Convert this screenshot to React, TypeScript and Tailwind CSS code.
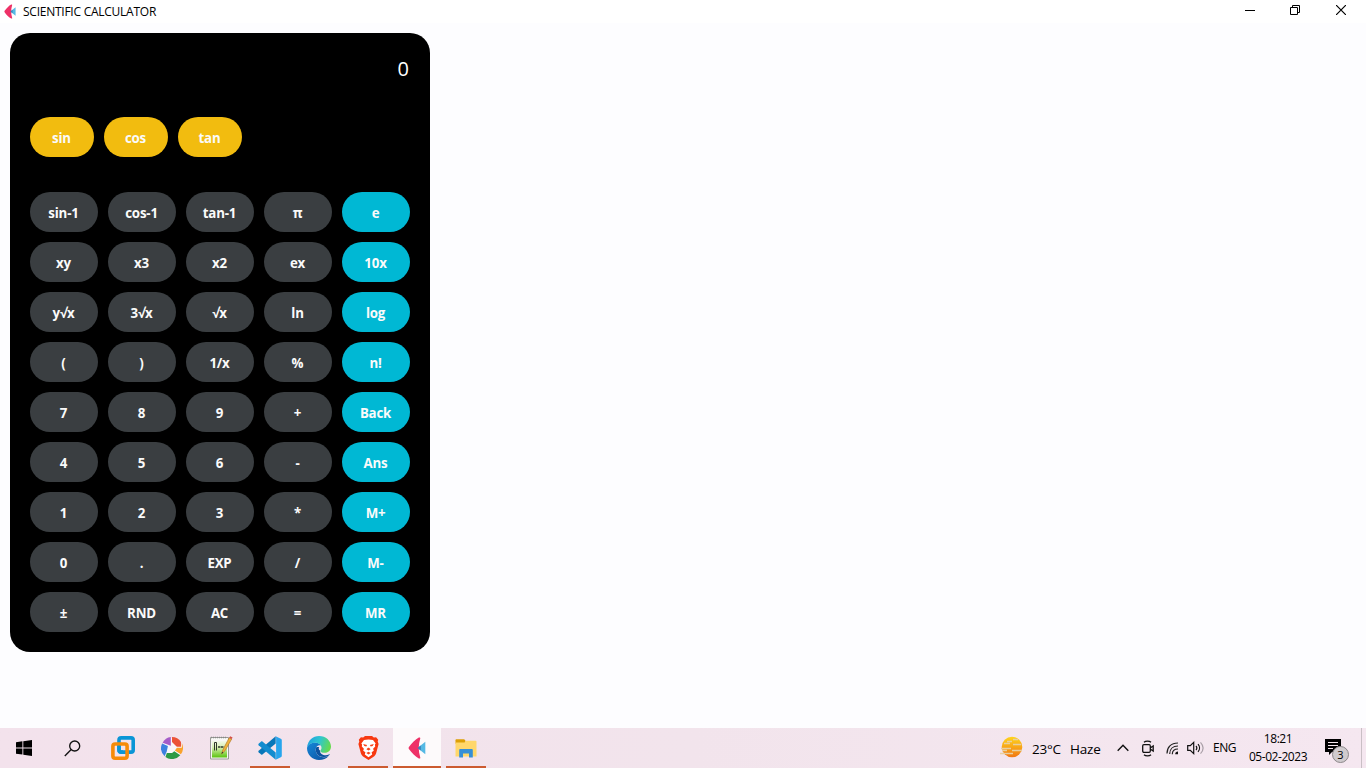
import React from "react";

const FONT = "font-['Open_Sans','Noto_Sans',sans-serif]";

const rows: string[][] = [
  ["sin-1", "cos-1", "tan-1", "π", "e"],
  ["xy", "x3", "x2", "ex", "10x"],
  ["y√x", "3√x", "√x", "ln", "log"],
  ["(", ")", "1/x", "%", "n!"],
  ["7", "8", "9", "+", "Back"],
  ["4", "5", "6", "-", "Ans"],
  ["1", "2", "3", "*", "M+"],
  ["0", ".", "EXP", "/", "M-"],
  ["±", "RND", "AC", "=", "MR"],
];

function CalcButton({ label, kind }: { label: string; kind: "trig" | "dark" | "accent" }) {
  const look =
    kind === "trig"
      ? "w-16 bg-[#f2bc0f]"
      : kind === "accent"
        ? "w-[68px] bg-[#00b8d4]"
        : "w-[68px] bg-[#3a3e41]";
  return (
    <button
      className={`${look} flex h-10 items-center justify-center rounded-[20px] pt-[3px] pr-px text-[13.3px] leading-none font-bold tracking-[-0.2px] text-[#fafafa]`}
    >
      {label}
    </button>
  );
}

function FletLogo({ className }: { className: string }) {
  return (
    <svg className={className} viewBox="0 0 18 22">
      <path d="M17.300 4.800v12.400L9.500 11z" fill="#55b9e4" />
      <path d="M10.800.5c1.300-.4 1.800.2 1.400 1.300-1.900 6-1.900 12.400 0 18.400.4 1.100-.1 1.700-1.400 1.300C7.500 19.800 3.600 15.800.9 12c-.5-.7-.5-1.300 0-2C3.600 6.200 7.500 2.200 10.800.5z" fill="#ee3167" />
      <path d="M9.500 11l3.300-2.600v5.200z" fill="#3d7fb8" />
    </svg>
  );
}

function WindowsIcon() {
  return (
    <svg className="size-4" viewBox="0 0 16 16" fill="#000">
      <path d="M0 2.300 6.400 1.300V7.500H0zM7.300 1.150 16 0v7.500H7.300zM0 8.400h6.400v6.200L0 13.700zM7.300 8.400H16V16l-8.700-1.200z" />
    </svg>
  );
}

function SearchIcon() {
  return (
    <svg className="size-[17px]" viewBox="0 0 17 17" fill="none" stroke="#111" strokeWidth="1.35">
      <circle cx="10.700" cy="6" r="5" />
      <path d="M7.200 9.600.8 16" />
    </svg>
  );
}

function VmwareIcon() {
  return (
    <svg className="size-6" viewBox="0 0 24 24" fill="none" strokeWidth="3.600">
      <rect x="8" y="1.900" width="14.200" height="14.200" rx="2.200" stroke="#0a95d6" />
      <rect x="1.900" y="8" width="14.200" height="14.200" rx="2.200" stroke="#f68b09" />
      <path d="M8 9.800V14a2.200 2.200 0 0 0 2.200 2.100H12" stroke="#0a95d6" />
    </svg>
  );
}

function PicasaIcon() {
  return (
    <svg className="size-[22px]" viewBox="0 0 22 22">
      <circle cx="11" cy="11" r="10" fill="#faf8fb" />
      <path d="M9.800.1v8.600L1.600 5.700A11 11 0 0 1 9.800.1z" fill="#a55cc8" />
      <path d="M11 0a11 11 0 0 1 9 5v4.700h-4.200L11 5z" fill="#ec5439" />
      <path d="M20.800 6.100a11 11 0 0 1-.9 11.200l-6-3.800 2-2.800h4.900z" fill="#f9a32c" />
      <path d="M13.300 14.300l6 4A11 11 0 0 1 4.500 19.900l1.300-4h5.300z" fill="#2d9a45" />
      <path d="M3.700 19.200A11 11 0 0 1 1.100 6.600l5.800 2.300-1.100 5.300z" fill="#3c81df" />
    </svg>
  );
}

function NotepadIcon() {
  return (
    <svg className="size-6" viewBox="0 0 24 24">
      <defs>
        <linearGradient id="pad" x1="0" y1="0" x2="0" y2="1">
          <stop offset="0" stopColor="#f4faea" />
          <stop offset=".4" stopColor="#d4efae" />
          <stop offset="1" stopColor="#5bc30f" />
        </linearGradient>
      </defs>
      <path d="M1.500 1.500h18v21.500h-18z" fill="#f8f8f5" stroke="#9a9c96" />
      <path d="M3 5h15v16.500H3z" fill="url(#pad)" />
      <path d="M2 1.500h16" stroke="#888" strokeDasharray="1 1" strokeWidth="1.500" />
      <path d="M5.500 6.500v8M7.500 6.500v8M5.500 6.500h2" stroke="#31382b" />
      <path d="M9 11h2.500M12 11h2.500" stroke="#31382b" strokeWidth="1.500" />
      <path d="m12.500 18 1.400-4.200L20.200 1.700 22.700 3l-6.600 11.600z" fill="#f1b33c" stroke="#a87020" strokeWidth=".6" />
      <path d="m20.200 1.700 1-1.500 2.400 1.300-.9 1.500z" fill="#d45148" />
      <path d="m12.500 18 .7-2.300 1.200.7z" fill="#333" />
    </svg>
  );
}

function CodeIcon() {
  return (
    <svg className="size-6" viewBox="0 0 24 24">
      <path d="M17.700.3v7.300L4.400 18.500c-.4.300-.8.300-1.200 0L.6 16.300c-.5-.5-.5-1.100 0-1.600z" fill="#0877b9" />
      <path d="M17.700 23.700v-7.300L4.400 5.500c-.4-.3-.8-.3-1.200 0L.6 7.700c-.5.500-.5 1.100 0 1.600z" fill="#128ccf" />
      <path d="m17.600.3 5.200 2.500c.6.300 1 .8 1 1.500v15.400c0 .7-.4 1.200-1 1.500l-5.200 2.500c.4-.4.500-.8.500-1.500V1.800c0-.6-.1-1.100-.5-1.500z" fill="#27a5ed" />
    </svg>
  );
}

function EdgeIcon() {
  return (
    <svg className="size-6" viewBox="0 0 24 24">
      <defs>
        <linearGradient id="wave" x1="0" y1=".2" x2="1" y2=".5">
          <stop offset="0" stopColor="#1f9fe0" />
          <stop offset=".5" stopColor="#2fc6cf" />
          <stop offset="1" stopColor="#65da4e" />
        </linearGradient>
        <linearGradient id="deep" x1="0" y1="0" x2="1" y2="1">
          <stop offset="0" stopColor="#1688d8" />
          <stop offset="1" stopColor="#0c4f9f" />
        </linearGradient>
      </defs>
      <path d="M0 12c.5-3.200 4-5.500 8.100-5.500 3 0 5.200 1.300 6 3.200-1.200-.7-3-.5-4.300.9C7.400 13.400 9 18.600 13 20.500c2.500 1.200 6 1 8.700-.6C19.500 22.700 16 24 12 24 5.400 24 0 18.700 0 12z" fill="url(#deep)" />
      <path d="M.1 11C.9 4.400 5.900 0 12.100 0 18.900 0 24 4.800 24 10.500c0 3.800-2.700 6.300-6.200 6.300-3.200 0-4.400-1-4.400-1.900 0-.7 1.100-1.200 1.100-3.200 0-2.700-2.700-5-6.400-5C4.200 6.700 1.300 8.700.1 11z" fill="url(#wave)" />
      <path d="M9.500 11c-2.300 4 .8 10.500 8 9.900 2.500-.2 4.600-1.300 5.300-2.500-.1-.5-.6-.2-1 .1-3.800 1.700-9.400-.2-8.700-4.100-1.300-.6-1.800-2.100-1-3.500z" fill="#0b529e" />
    </svg>
  );
}

function BraveIcon() {
  return (
    <svg className="h-6 w-[21px]" viewBox="0 0 21 24">
      <path d="M5.200 1.500 7 0h7l1.800 1.500 2.300-.2 2.100 2.500-.5 1.700.9 2.400-2.400 9c-.5 1.800-1.500 3.100-3 4.200L10.500 24l-4.700-2.900c-1.500-1.100-2.500-2.400-3-4.200L.4 7.900l.9-2.400-.5-1.700 2.100-2.500z" fill="#f73810" />
      <path d="m6 4.100 4.500-.7 4.500.7 2.700 3.300-.8 1 .3 2-2.100 2.300.7 2-2.200 1.500.6 2.300-3.700 2.700-3.700-2.700.6-2.300-2.200-1.500.7-2-2.100-2.300.3-2-.8-1z" fill="#fff" />
      <path d="m5.200 8 3.900 1.100-.8 1.500-2-.5zm10.600 0-3.900 1.100.8 1.500 2-.5zM8.400 13.200l1.600-1.500h1l1.600 1.500-2.100 1.300zM8.300 17l2.200-1.200 2.200 1.200-2.200 1.500z" fill="#f74319" />
    </svg>
  );
}

function FolderIcon() {
  return (
    <svg className="h-[19px] w-[22px]" viewBox="0 0 22 19">
      <path d="M.5 1.200C.5.500.8.200 1.500.2h7.700l1.300 1.500v3H.5z" fill="#dda006" />
      <path d="M.5 3.500h9L11 1.700h9.600c.6 0 .9.300.9.900v15H.5z" fill="#ffd76b" />
      <path d="M4.200 18.500v-7.300c0-.7.400-1.100 1.100-1.100h11.400c.7 0 1.100.4 1.100 1.100v7.300H14v-4H8v4z" fill="#368fd6" />
    </svg>
  );
}

function Task({ children, open, active }: { children: React.ReactNode; open?: boolean; active?: boolean }) {
  return (
    <div className={`flex h-10 w-12 flex-col items-center ${active ? "bg-[#fdfafb]" : ""}`}>
      <div className="flex h-[38px] items-center pt-[2px]">{children}</div>
      <div className={`h-[2px] ${active ? "w-12" : "w-10"} ${open || active ? "bg-[#cc5b30]" : ""}`} />
    </div>
  );
}

function HazeIcon() {
  return (
    <svg className="h-[22px] w-[23px]" viewBox="0 0 23 22">
      <defs>
        <linearGradient id="sun" x1="0" y1="0" x2="0" y2="1">
          <stop offset="0" stopColor="#ffd51c" />
          <stop offset="1" stopColor="#f17813" />
        </linearGradient>
      </defs>
      <circle cx="12" cy="11" r="10.300" fill="url(#sun)" />
      <path d="M4 7.500h6M13 3.500h5M7 5.500h5M1 12.500h10M13 8.500h8M2 14.500h5M12 14.500h10M0 17.500h13" stroke="#e8cfa0" strokeWidth="1.400" />
    </svg>
  );
}

function Tray() {
  return (
    <div className="flex h-10 flex-1 items-center justify-end text-black">
      <div className="mb-[3px] h-[22px] w-[23px]"><HazeIcon /></div>
      <div className="flex w-[94px] gap-[9px] pt-[2px] pl-[9px] text-[13.500px] tracking-[-0.2px] whitespace-nowrap">
        <span className="w-[29px] tracking-[-0.25px]">23°C</span>
        <span>Haze</span>
      </div>
      <svg className="h-2 w-3" viewBox="0 0 12 8" fill="none" stroke="#111" strokeWidth="1.400"><path d="m.7 6.800 5.300-5.500 5.300 5.500" /></svg>
      <svg className="ml-[13px] h-[17px] w-3" viewBox="0 0 12 17" fill="none" stroke="#111" strokeWidth="1.300">
        <rect x=".7" y="4.700" width="7.600" height="7.600" rx="1.200" />
        <path d="m8.500 7.800 2.700-1.900v5.200L8.500 9.200M2 2.300C3.700.8 7.300.8 9 2.300M2 14.700c1.700 1.500 5.300 1.500 7 0" />
      </svg>
      <svg className="ml-3 h-[14px] w-[13px]" viewBox="0 0 13 14" fill="none" stroke="#222" strokeWidth="1.200">
        <path d="M1 12.500C1 6 5 2 12 2M3.700 13C3.700 8 7 5 12 5M6.300 13.200C6.300 9.800 8.500 8 12 8" />
        <path d="M9.200 13.200c0-1.700 1-2.600 2.800-2.600v2.600z" fill="#111" stroke="none" />
      </svg>
      <svg className="ml-2 h-[14px] w-[17px]" viewBox="0 0 17 14" fill="none" stroke="#111" strokeWidth="1.200">
        <path d="M.7 4.700h2.600L6.700 1.400v11.200L3.300 9.300H.7zM9 5c1 1.200 1 2.800 0 4M11 3.200c2 2.200 2 5.400 0 7.600" />
        <path d="M13.500 1.300c3.200 3.500 3.200 7.900 0 11.400" stroke="#aaa0a8" />
      </svg>
      <div className="ml-[9px] w-[24px] text-[12px] tracking-[-0.5px]">ENG</div>
      <div className="ml-[6px] w-[70px] text-center text-[12px] leading-[18px] tracking-[-0.45px] whitespace-nowrap">
        <div>18:21</div>
        <div>05-02-2023</div>
      </div>
      <div className="relative ml-[12px] h-[18px] w-[25px]">
        <svg className="h-4 w-4" viewBox="0 0 16 16"><path d="M0 0h16v13H7l-3 3v-3H0z" fill="#000" /><path d="M3 3.500h10M3 6.500h10M3 9.500h5" stroke="#f5e7ee" /></svg>
        <div className="absolute top-[7px] left-[7px] flex size-[17px] items-center justify-center rounded-full border border-[#8d888b] bg-[#d0cbce] text-[11px] leading-none">3</div>
      </div>
      <div className="ml-[11px] h-10 w-px bg-[#c9bfc5]" />
      <div className="h-10 w-1" />
    </div>
  );
}

export default function App() {
  return (
    <div className={`${FONT} flex h-screen w-screen flex-col overflow-hidden bg-[#fdfdff]`}>
      <header className="flex h-[23px] items-center bg-white pl-1">
        <FletLogo className="h-[15px] w-3" />
        <span className="ml-[7px] pt-px text-[12px] leading-none tracking-[-0.25px] text-black">SCIENTIFIC CALCULATOR</span>
        <div className="ml-auto flex h-[23px] items-start pt-[5px] pr-5">
          <svg className="h-[10px] w-[10px]" viewBox="0 0 10 10" stroke="#000"><path d="M0 5.500h10" /></svg>
          <svg className="ml-[35px] h-[10px] w-[10px]" viewBox="0 0 10 10" fill="none" stroke="#000"><path d="M.5 2.500h7v7h-7zM2.500 2.500v-2h7v7h-2" /></svg>
          <svg className="ml-9 h-[10px] w-[10px]" viewBox="0 0 10 10" stroke="#000" strokeWidth="1.200"><path d="m0 0 10 10M10 0 0 10" /></svg>
        </div>
      </header>
      <main className="flex-1 px-[10px] pt-[10px]">
        <section className="h-[619px] w-[420px] rounded-[20px] bg-black p-5">
          <div className="flex h-[64px] items-start justify-end pt-[2px] pr-px text-[20px] leading-[28px] text-white">0</div>
          <div className="flex gap-[10px]">
            {["sin", "cos", "tan"].map((t) => <CalcButton key={t} label={t} kind="trig" />)}
          </div>
          <div className="mt-[35px] grid grid-cols-[repeat(5,68px)] gap-[10px]">
            {rows.map((row) => row.map((t, i) => (
              <CalcButton key={t} label={t} kind={i === 4 ? "accent" : "dark"} />
            )))}
          </div>
        </section>
      </main>
      <footer className="flex h-10 bg-linear-to-r from-[#f3e2ec] via-[#f2e4ec] to-[#f5e7f0]">
        <div className="flex">
          <Task><WindowsIcon /></Task>
          <Task><SearchIcon /></Task>
        </div>
        <div className="ml-[3px] flex gap-px">
          <Task><VmwareIcon /></Task>
          <Task><PicasaIcon /></Task>
          <Task><NotepadIcon /></Task>
          <Task open><CodeIcon /></Task>
          <Task><EdgeIcon /></Task>
          <Task open><BraveIcon /></Task>
          <Task active><FletLogo className="h-[22px] w-[18px]" /></Task>
          <Task open><FolderIcon /></Task>
        </div>
        <Tray />
      </footer>
    </div>
  );
}
